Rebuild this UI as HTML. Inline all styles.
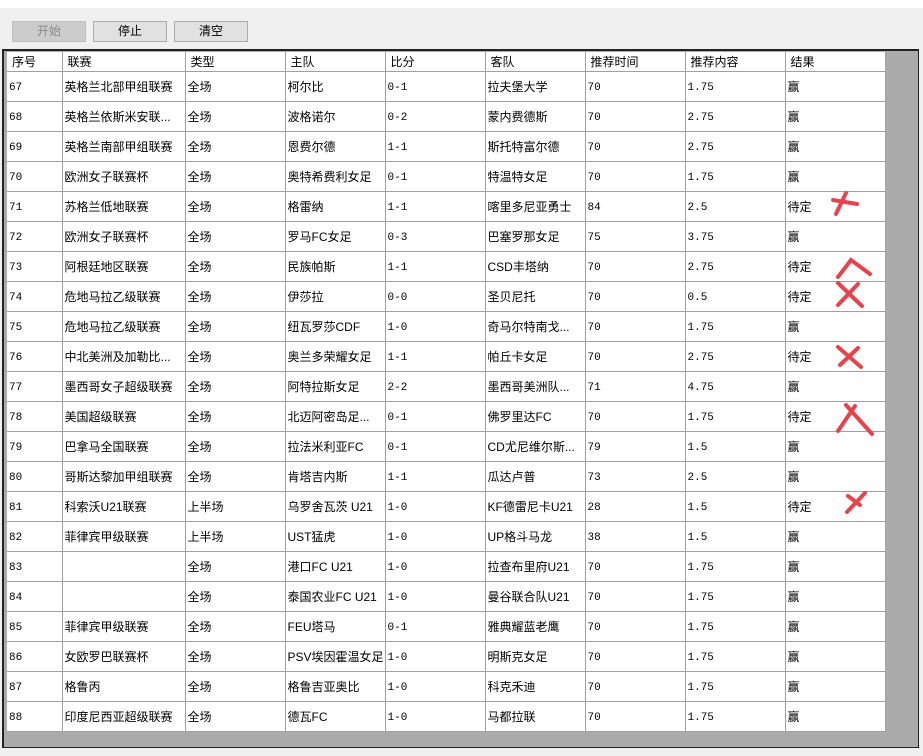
<!DOCTYPE html>
<html><head><meta charset="utf-8"><style>
body{margin:0;width:923px;height:756px;background:#f0f0f0;position:relative;overflow:hidden;font-family:"Liberation Sans","Noto Sans CJK SC",sans-serif;font-size:12px;color:#000}
.top{position:absolute;left:0;top:0;width:923px;height:8px;background:#fff}
.btn{position:absolute;top:21px;width:72px;height:19px;border:1px solid #adadad;background:#e1e1e1;text-align:center;line-height:19px;font-size:12px}
.dis{background:#ccc;color:#888;border-color:#bfbfbf}
.frame{position:absolute;left:2px;top:49px;width:917px;height:699px;border:1px solid #222;border-left-width:2px;border-top-width:2px;background:#ababab;box-sizing:border-box}
table{position:absolute;left:7px;top:52px;border-collapse:collapse;background:#fff;table-layout:fixed}
td{border-right:1px solid #a0a0a0;border-bottom:1px solid #a0a0a0;height:29px;padding:1px 0 0 2px;box-sizing:border-box;white-space:nowrap;overflow:hidden;font-size:12px}
tr.h td{height:19px;padding:0 0 0 5px}
tr:not(.h) td{height:30px}
td.n{font-family:"Liberation Mono","Noto Sans CJK SC",monospace;font-size:11px;padding-top:3px}
svg{position:absolute;left:0;top:0}
</style></head><body>
<div class="top"></div>
<div class="btn dis" style="left:12px">开始</div>
<div class="btn" style="left:93px">停止</div>
<div class="btn" style="left:174px">清空</div>
<div class="frame"></div>
<table>
<colgroup><col style="width:55px"><col style="width:123px"><col style="width:100px"><col style="width:100px"><col style="width:100px"><col style="width:100px"><col style="width:100px"><col style="width:100px"><col style="width:100px"></colgroup>
<tr class="h"><td>序号</td><td>联赛</td><td>类型</td><td>主队</td><td>比分</td><td>客队</td><td>推荐时间</td><td>推荐内容</td><td>结果</td></tr>
<tr><td class="n">67</td><td>英格兰北部甲组联赛</td><td>全场</td><td>柯尔比</td><td class="n">0-1</td><td>拉夫堡大学</td><td class="n">70</td><td class="n">1.75</td><td>赢</td></tr>
<tr><td class="n">68</td><td>英格兰依斯米安联...</td><td>全场</td><td>波格诺尔</td><td class="n">0-2</td><td>蒙内费德斯</td><td class="n">70</td><td class="n">2.75</td><td>赢</td></tr>
<tr><td class="n">69</td><td>英格兰南部甲组联赛</td><td>全场</td><td>恩费尔德</td><td class="n">1-1</td><td>斯托特富尔德</td><td class="n">70</td><td class="n">2.75</td><td>赢</td></tr>
<tr><td class="n">70</td><td>欧洲女子联赛杯</td><td>全场</td><td>奥特希费利女足</td><td class="n">0-1</td><td>特温特女足</td><td class="n">70</td><td class="n">1.75</td><td>赢</td></tr>
<tr><td class="n">71</td><td>苏格兰低地联赛</td><td>全场</td><td>格雷纳</td><td class="n">1-1</td><td>喀里多尼亚勇士</td><td class="n">84</td><td class="n">2.5</td><td>待定</td></tr>
<tr><td class="n">72</td><td>欧洲女子联赛杯</td><td>全场</td><td>罗马FC女足</td><td class="n">0-3</td><td>巴塞罗那女足</td><td class="n">75</td><td class="n">3.75</td><td>赢</td></tr>
<tr><td class="n">73</td><td>阿根廷地区联赛</td><td>全场</td><td>民族帕斯</td><td class="n">1-1</td><td>CSD丰塔纳</td><td class="n">70</td><td class="n">2.75</td><td>待定</td></tr>
<tr><td class="n">74</td><td>危地马拉乙级联赛</td><td>全场</td><td>伊莎拉</td><td class="n">0-0</td><td>圣贝尼托</td><td class="n">70</td><td class="n">0.5</td><td>待定</td></tr>
<tr><td class="n">75</td><td>危地马拉乙级联赛</td><td>全场</td><td>纽瓦罗莎CDF</td><td class="n">1-0</td><td>奇马尔特南戈...</td><td class="n">70</td><td class="n">1.75</td><td>赢</td></tr>
<tr><td class="n">76</td><td>中北美洲及加勒比...</td><td>全场</td><td>奥兰多荣耀女足</td><td class="n">1-1</td><td>帕丘卡女足</td><td class="n">70</td><td class="n">2.75</td><td>待定</td></tr>
<tr><td class="n">77</td><td>墨西哥女子超级联赛</td><td>全场</td><td>阿特拉斯女足</td><td class="n">2-2</td><td>墨西哥美洲队...</td><td class="n">71</td><td class="n">4.75</td><td>赢</td></tr>
<tr><td class="n">78</td><td>美国超级联赛</td><td>全场</td><td>北迈阿密岛足...</td><td class="n">0-1</td><td>佛罗里达FC</td><td class="n">70</td><td class="n">1.75</td><td>待定</td></tr>
<tr><td class="n">79</td><td>巴拿马全国联赛</td><td>全场</td><td>拉法米利亚FC</td><td class="n">0-1</td><td>CD尤尼维尔斯...</td><td class="n">79</td><td class="n">1.5</td><td>赢</td></tr>
<tr><td class="n">80</td><td>哥斯达黎加甲组联赛</td><td>全场</td><td>肯塔吉内斯</td><td class="n">1-1</td><td>瓜达卢普</td><td class="n">73</td><td class="n">2.5</td><td>赢</td></tr>
<tr><td class="n">81</td><td>科索沃U21联赛</td><td>上半场</td><td>乌罗舍瓦茨 U21</td><td class="n">1-0</td><td>KF德雷尼卡U21</td><td class="n">28</td><td class="n">1.5</td><td>待定</td></tr>
<tr><td class="n">82</td><td>菲律宾甲级联赛</td><td>上半场</td><td>UST猛虎</td><td class="n">1-0</td><td>UP格斗马龙</td><td class="n">38</td><td class="n">1.5</td><td>赢</td></tr>
<tr><td class="n">83</td><td></td><td>全场</td><td>港口FC U21</td><td class="n">1-0</td><td>拉查布里府U21</td><td class="n">70</td><td class="n">1.75</td><td>赢</td></tr>
<tr><td class="n">84</td><td></td><td>全场</td><td>泰国农业FC U21</td><td class="n">1-0</td><td>曼谷联合队U21</td><td class="n">70</td><td class="n">1.75</td><td>赢</td></tr>
<tr><td class="n">85</td><td>菲律宾甲级联赛</td><td>全场</td><td>FEU塔马</td><td class="n">0-1</td><td>雅典耀蓝老鹰</td><td class="n">70</td><td class="n">1.75</td><td>赢</td></tr>
<tr><td class="n">86</td><td>女欧罗巴联赛杯</td><td>全场</td><td>PSV埃因霍温女足</td><td class="n">1-0</td><td>明斯克女足</td><td class="n">70</td><td class="n">1.75</td><td>赢</td></tr>
<tr><td class="n">87</td><td>格鲁丙</td><td>全场</td><td>格鲁吉亚奥比</td><td class="n">1-0</td><td>科克禾迪</td><td class="n">70</td><td class="n">1.75</td><td>赢</td></tr>
<tr><td class="n">88</td><td>印度尼西亚超级联赛</td><td>全场</td><td>德瓦FC</td><td class="n">1-0</td><td>马都拉联</td><td class="n">70</td><td class="n">1.75</td><td>赢</td></tr>
</table>
<svg width="923" height="756" fill="none" stroke="#e8434a" stroke-width="4" stroke-linecap="round">
<path d="M846 193 L836 214 M833 200 L857 204"/>
<path d="M838 277 L851 260 L870 274"/>
<path d="M838 283 L862 306 M858 284 L838 305"/>
<path d="M838 347 L861 367 M858 348 L840 365"/>
<path d="M846 405 L872 434 M855 406 L838 431"/>
<path d="M847 512 L865 493 M848 496 L860 505"/>
</svg>
</body></html>
